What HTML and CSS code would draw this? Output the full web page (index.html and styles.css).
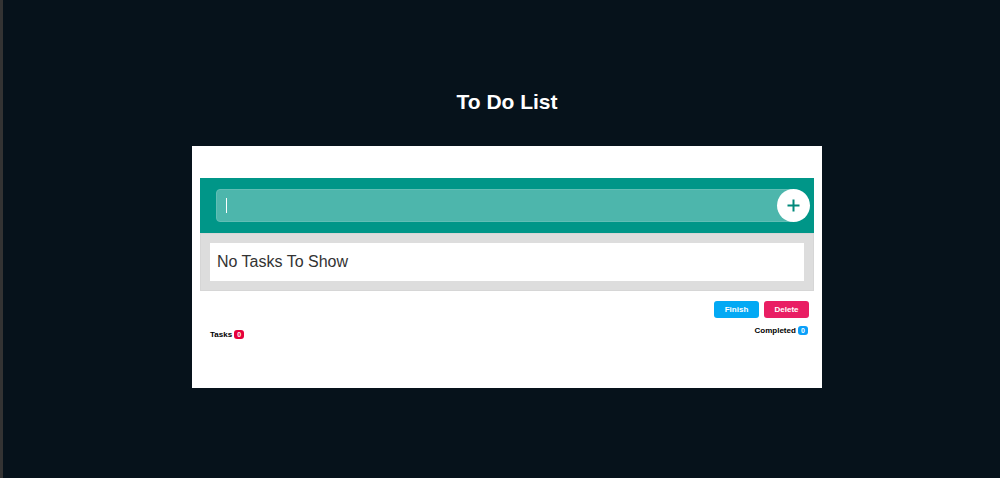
FILE: index.html
```
<!DOCTYPE html>
<html lang="en">
<head>
    <meta charset="UTF-8">
    <meta name="viewport" content="width=device-width, initial-scale=1.0">
    <title>To Do List</title>
    <link rel="stylesheet" href="styles.css">
</head>
<body>
    <h1 class="title">To Do List</h1>
    <div class="container">
        <form class="add-task">
            <input type="text" class="task-input" aria-label="New task">
            <button type="button" class="plus" aria-label="Add task">
                <svg width="13" height="13" viewBox="0 0 13 13">
                    <path d="M6.5 0.5V12.5M0.5 6.5H12.5" stroke="#00897b" stroke-width="2"/>
                </svg>
            </button>
        </form>
        <div class="task-content">
            <p class="no-tasks">No Tasks To Show</p>
        </div>
        <div class="actions">
            <button type="button" class="finish">Finish</button>
            <button type="button" class="delete">Delete</button>
        </div>
        <div class="task-stats">
            <div class="tasks-count">Tasks <span>0</span></div>
            <div class="tasks-completed">Completed <span>0</span></div>
        </div>
    </div>
</body>
</html>
```

FILE: styles.css
```
* {
    box-sizing: border-box;
}
body {
    margin: 0;
    min-height: 100vh;
    padding: 88px 0 90px 11px;
    border-left: 3px solid #333;
    background: #06121b;
    font-family: "Liberation Sans", Arial, sans-serif;
}
.title {
    margin: 0 0 30px;
    color: #fff;
    font-size: 21px;
    line-height: 28px;
    text-align: center;
}
.container {
    width: 90%;
    max-width: 630px;
    margin: 0 auto;
    padding: 32px 8px 49px;
    background: #fff;
}
/* Add task */
.add-task {
    display: flex;
    align-items: center;
    padding: 11px 4px 11px 16px;
    background: #009688;
}
.task-input {
    flex: 1;
    min-width: 0;
    height: 33px;
    padding: 0 24px 0 10px;
    border: 1px solid #62beb5;
    border-radius: 4px;
    outline: none;
    color: #fff;
    font-size: 16px;
    font-family: inherit;
    /* text cursor */
    background: linear-gradient(#fff, #fff) 9px center / 1px 15px no-repeat #4db6ac;
}
.plus {
    display: flex;
    align-items: center;
    justify-content: center;
    width: 33px;
    height: 33px;
    margin-left: -17px;
    padding: 0;
    border: none;
    border-radius: 50%;
    background: #fff;
    z-index: 1;
}
/* Tasks */
.task-content {
    padding: 9px;
    border: 1px solid #d6d6d6;
    background: #ddd;
}
.no-tasks {
    margin: 0;
    padding: 0 7px;
    background: #fff;
    color: #333;
    font-size: 16px;
    line-height: 38px;
}
.actions {
    display: flex;
    justify-content: flex-end;
    gap: 5px;
    padding: 10px 5px 8px;
}
.actions button {
    width: 45px;
    height: 17px;
    padding: 0;
    border: none;
    border-radius: 3px;
    color: #fff;
    font-size: 8px;
    font-weight: bold;
    font-family: inherit;
}
.finish {
    background: #03a9f4;
}
.actions .delete {
    background: #e91e63;
}
/* Stats */
.task-stats {
    display: flex;
    justify-content: space-between;
    padding: 0 6px 0 10px;
    font-size: 8px;
    line-height: 9px;
    font-weight: bold;
}
.task-stats span {
    display: inline-block;
    padding: 0 3px;
    border-radius: 3px;
    color: #fff;
    font-size: 7px;
}
.tasks-count {
    padding-top: 4px;
}
.tasks-count span {
    background: #e6003c;
}
.tasks-completed span {
    background: #0a9ff9;
}
```
